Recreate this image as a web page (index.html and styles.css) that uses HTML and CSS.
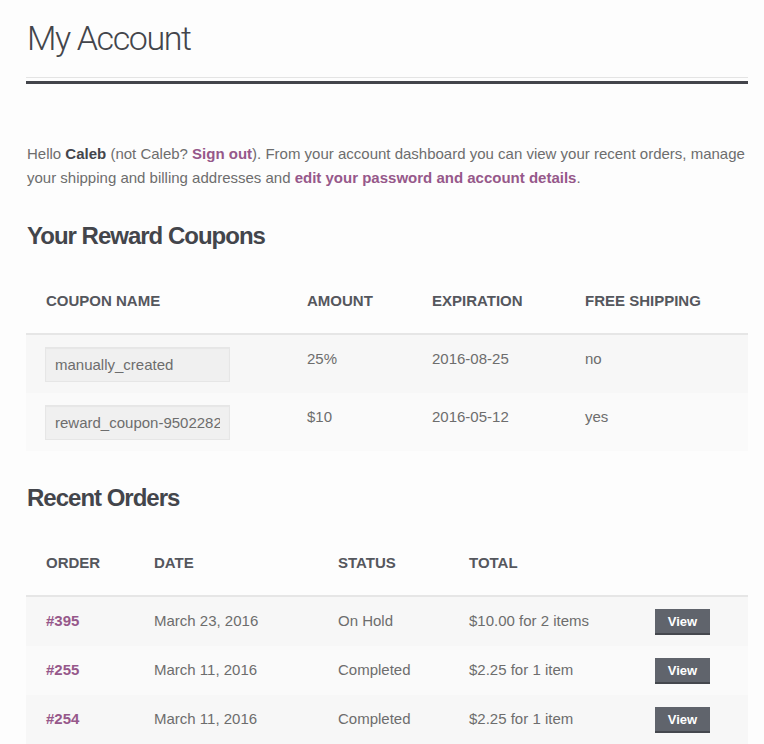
FILE: index.html
```html
<!DOCTYPE html>
<html lang="en">
<head>
<meta charset="utf-8">
<title>My Account</title>
<link rel="stylesheet" href="styles.css">
</head>
<body>
<main class="page">
  <header class="page-header">
    <h1 class="page-title">My Account</h1>
  </header>
  <div class="rule"></div>

  <p class="intro">Hello <strong>Caleb</strong> (not Caleb? <a href="#">Sign out</a>). From your account dashboard you can view your recent orders, manage your shipping and billing addresses and <a href="#">edit your password and account details</a>.</p>

  <h2 class="section-title">Your Reward Coupons</h2>
  <table class="shop-table coupons">
    <colgroup>
      <col class="c-name"><col class="c-amount"><col class="c-exp"><col class="c-ship">
    </colgroup>
    <thead>
      <tr><th>Coupon Name</th><th>Amount</th><th>Expiration</th><th>Free Shipping</th></tr>
    </thead>
    <tbody>
      <tr>
        <td><input class="code" type="text" value="manually_created" readonly></td>
        <td>25%</td><td>2016-08-25</td><td>no</td>
      </tr>
      <tr>
        <td><input class="code" type="text" value="reward_coupon-9502282" readonly></td>
        <td>$10</td><td>2016-05-12</td><td>yes</td>
      </tr>
    </tbody>
  </table>

  <h2 class="section-title">Recent Orders</h2>
  <table class="shop-table orders">
    <colgroup>
      <col class="o-order"><col class="o-date"><col class="o-status"><col class="o-total"><col class="o-action">
    </colgroup>
    <thead>
      <tr><th>Order</th><th>Date</th><th>Status</th><th>Total</th><th></th></tr>
    </thead>
    <tbody>
      <tr><td><a class="order-link" href="#">#395</a></td><td>March 23, 2016</td><td>On Hold</td><td>$10.00 for 2 items</td><td class="action"><a class="btn" href="#">View</a></td></tr>
      <tr><td><a class="order-link" href="#">#255</a></td><td>March 11, 2016</td><td>Completed</td><td>$2.25 for 1 item</td><td class="action"><a class="btn" href="#">View</a></td></tr>
      <tr><td><a class="order-link" href="#">#254</a></td><td>March 11, 2016</td><td>Completed</td><td>$2.25 for 1 item</td><td class="action"><a class="btn" href="#">View</a></td></tr>
    </tbody>
  </table>
</main>
</body>
</html>
```

FILE: styles.css
```css
html, body {
  margin: 0;
  padding: 0;
  background: #fdfdfd;
}

body {
  font-family: "Liberation Sans", Arial, sans-serif;
  font-size: 15px;
  line-height: 1.618;
  color: #6d6d6d;
}

.page {
  padding: 0 16px 0 26px;
}

.page-header {
  padding-top: 18px;
  padding-bottom: 18px;
  border-bottom: 1px solid #e4e4e4;
}

.page-title {
  margin: 0;
  padding-left: 1px;
  font-family: Roboto, "Liberation Sans", sans-serif;
  font-weight: 300;
  font-size: 34px;
  line-height: 1.2;
  letter-spacing: -1.4px;
  color: #43454b;
}

.rule {
  height: 3px;
  margin-top: 3px;
  background: #43454b;
}

.intro {
  margin: 58px 0 0 1px;
}

.intro strong {
  color: #43454b;
  font-weight: 700;
}

a {
  color: #96588a;
  font-weight: 700;
  text-decoration: none;
}

.section-title {
  margin: 32px 0 18px 1px;
  font-size: 24px;
  line-height: 1.2;
  font-weight: 700;
  letter-spacing: -1px;
  color: #43454b;
}

.shop-table {
  width: 100%;
  border-collapse: collapse;
  border-spacing: 0;
  table-layout: fixed;
}

.shop-table th {
  text-align: left;
  padding: 20px;
  font-size: 15px;
  font-weight: 700;
  text-transform: uppercase;
  color: #55575d;
  border-bottom: 2px solid #e6e6e6;
  white-space: nowrap;
}

.shop-table td {
  padding: 12px 20px 11px 20px;
  vertical-align: top;
  background: #f7f7f7;
  white-space: nowrap;
}

.shop-table tbody tr:nth-child(2n) td {
  background: #fafafa;
}

.coupons td:first-child {
  padding-right: 0;
}

.orders td {
  padding-bottom: 12.4px;
}

.orders td.action {
  padding-bottom: 11px;
}

.c-name { width: 261px; }
.c-amount { width: 125px; }
.c-exp { width: 153px; }
.c-ship { width: 183px; }

.o-order { width: 108px; }
.o-date { width: 184px; }
.o-status { width: 131px; }
.o-total { width: 186px; }
.o-action { width: 113px; }

.code {
  display: block;
  box-sizing: border-box;
  width: 185px;
  height: 35px;
  margin: 0 0 0 -1px;
  padding: 0 9px;
  font-family: "Liberation Sans", Arial, sans-serif;
  font-size: 15px;
  color: #6d6d6d;
  background: #f0f0f0;
  border: 1px solid #e6e6e6;
  border-radius: 0;
  box-shadow: inset 0 1px 1px rgba(0, 0, 0, 0.04);
  outline: none;
}

.orders .order-link {
  font-weight: 700;
}

.btn {
  display: block;
  box-sizing: border-box;
  width: 55px;
  height: 26px;
  font-size: 13px;
  line-height: 25px;
  text-align: center;
  font-weight: 700;
  color: #ffffff;
  background: #60646c;
  border-bottom: 2px solid #45484e;
}

.coupons + .section-title {
  margin-top: 33px;
}
```
